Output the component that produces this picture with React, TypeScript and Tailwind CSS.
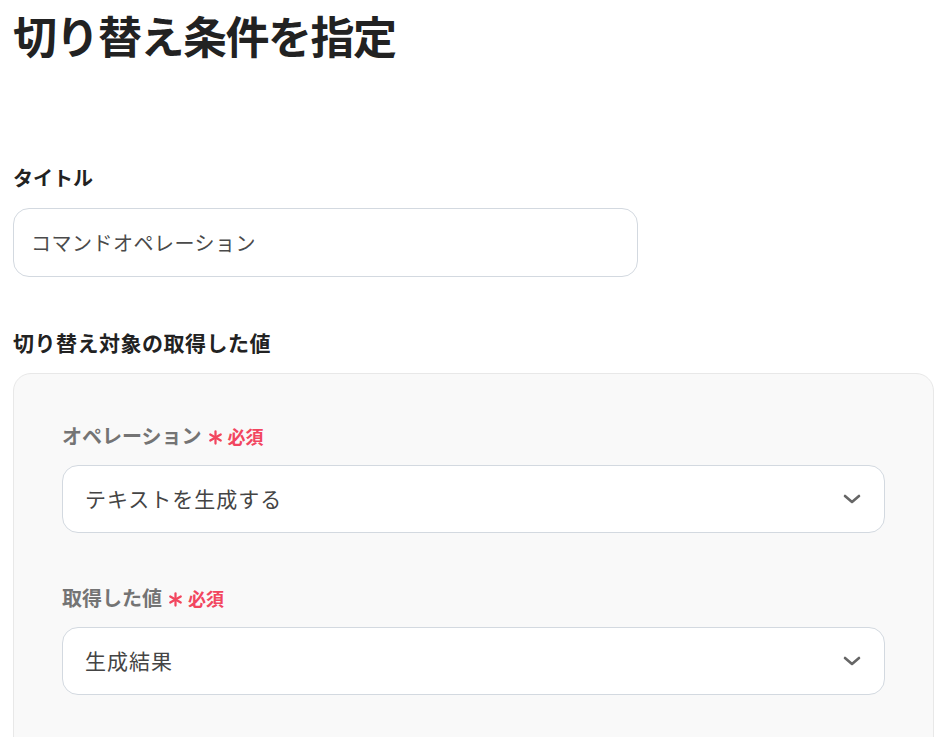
import React from "react";

const font = { fontFamily: '"Noto Sans CJK JP", "Noto Sans", sans-serif' };

function Chevron() {
  return (
    <svg width="18" height="10" viewBox="0 0 18 10" fill="none">
      <path d="M2 2 L9 8 L16 2" stroke="#666666" strokeWidth="2.6" strokeLinecap="round" strokeLinejoin="round" />
    </svg>
  );
}

function Select({ value }: { value: string }) {
  return (
    <div className="flex h-[68px] w-full items-center justify-between rounded-[16px] border border-[#d3d9e0] bg-white pl-[22px] pr-[23px]">
      <span className="text-[21px] tracking-[1px] text-[#444444]">{value}</span>
      <Chevron />
    </div>
  );
}

function Asterisk() {
  return (
    <svg width="15" height="15" viewBox="0 0 16 16" fill="none" className="mt-[2px]">
      <g stroke="#f2465f" strokeWidth="2.4" strokeLinecap="round">
        <path d="M8 1.5 V14.5" />
        <path d="M2.4 4.75 L13.6 11.25" />
        <path d="M2.4 11.25 L13.6 4.75" />
      </g>
    </svg>
  );
}

function Required() {
  return (
    <span className="ml-[6px] flex items-center text-[#f2465f]">
      <Asterisk />
      <span className="ml-[5px] text-[18px] font-bold">必須</span>
    </span>
  );
}

export default function App() {
  return (
    <div className="min-h-[737px] bg-white px-[13px] pt-[5px] text-[#222222]" style={font}>
      <h1 className="text-[44px] font-bold leading-[60px] tracking-[-1.5px] text-[#222222]">切り替え条件を指定</h1>

      <div className="mt-[98px] text-[20px] font-bold leading-[30px]">タイトル</div>
      <div className="mt-[15px] flex h-[69px] w-[625px] items-center rounded-[16px] border border-[#d3d9e0] bg-white pl-[17px]">
        <span className="text-[20px] tracking-[0.5px] text-[#4a4a4a]">コマンドオペレーション</span>
      </div>

      <div className="mt-[50px] text-[21px] font-bold leading-[30px] tracking-[0.5px]">切り替え対象の取得した値</div>

      <div className="mt-[16px] rounded-t-[18px] border border-[#e8e8e8] bg-[#f9f9f9] px-[48px] pt-[47px] pb-[60px]">
        <div className="flex items-center leading-[30px]">
          <span className="text-[20px] font-bold text-[#747474]">オペレーション</span>
          <Required />
        </div>
        <div className="mt-[14px]">
          <Select value="テキストを生成する" />
        </div>

        <div className="mt-[50px] flex items-center leading-[30px]">
          <span className="text-[20px] font-bold text-[#747474]">取得した値</span>
          <Required />
        </div>
        <div className="mt-[14px]">
          <Select value="生成結果" />
        </div>
      </div>
    </div>
  );
}
